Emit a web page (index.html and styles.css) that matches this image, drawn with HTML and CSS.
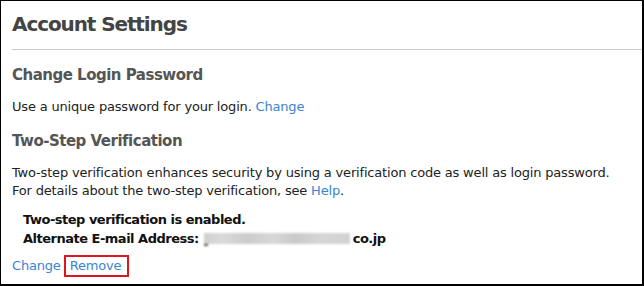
FILE: index.html
```html
<!DOCTYPE html>
<html>
<head>
<meta charset="utf-8">
<link rel="stylesheet" href="styles.css">
</head>
<body>
<div class="frame">
  <h1 class="title">Account Settings</h1>
  <div class="content">
    <h2 class="section-title first">Change Login Password</h2>
    <p class="text">Use a unique password for your login. <a class="link" href="#">Change</a></p>
    <h2 class="section-title">Two-Step Verification</h2>
    <p class="text">Two-step verification enhances security by using a verification code as well as login password.<br>For details about the two-step verification, see <a class="link" href="#">Help</a>.</p>
    <div class="status">
      <div>Two-step verification is enabled.</div>
      <div>Alternate E-mail Address: <span class="blur"></span>co.jp</div>
    </div>
    <div class="actions">
      <a class="link" href="#">Change</a>
      <a class="link highlight" href="#">Remove</a>
    </div>
  </div>
</div>
</body>
</html>
```
FILE: styles.css
```css
html, body {
  margin: 0;
  padding: 0;
  background: #fff;
}
.frame {
  box-sizing: border-box;
  width: 644px;
  height: 286px;
  border-style: solid;
  border-color: #000;
  border-width: 1px 2px 2px 1px;
  font-family: "DejaVu Sans", Verdana, sans-serif;
  color: #222;
  overflow: hidden;
}
.title {
  margin: 0 0 0 11px;
  padding: 10px 0 12px;
  font-size: 20px;
  line-height: 26px;
  letter-spacing: -1.1px;
  font-weight: bold;
  color: #444;
  border-bottom: 1px solid #ccc;
}
.content {
  padding: 0 0 0 11px;
}
.section-title {
  margin: 15px 0 0;
  font-size: 15px;
  line-height: 20px;
  letter-spacing: -0.5px;
  font-weight: bold;
  color: #555;
}
.text {
  margin: 13px 0 0;
  font-size: 13px;
  line-height: 18px;
  letter-spacing: -0.18px;
}
.link {
  color: #3a85d2;
  text-decoration: none;
}
.status {
  margin: 10px 0 0 11px;
  font-size: 13px;
  line-height: 19px;
  letter-spacing: -0.5px;
  font-weight: bold;
  color: #111;
}
.blur {
  position: relative;
  display: inline-block;
  width: 146px;
  height: 11px;
  margin: 0 3px 0 1px;
  vertical-align: -1px;
  background: linear-gradient(90deg, #cfcfcf 0%, #dadada 12%, #cccccc 30%, #d8d8d8 48%, #c9c9c9 62%, #d6d6d6 80%, #d2d2d2 100%);
  filter: blur(1px);
}
.blur::before {
  content: "";
  position: absolute;
  left: 0;
  bottom: -2px;
  width: 4px;
  height: 2px;
  background: #555;
}
.actions {
  margin-top: 7px;
  font-size: 13px;
  line-height: 18px;
  letter-spacing: -0.18px;
  display: flex;
  align-items: center;
  gap: 3px;
}
.highlight {
  border: 2px solid #e0141e;
  padding: 0 6px 0 4px;
}
```
